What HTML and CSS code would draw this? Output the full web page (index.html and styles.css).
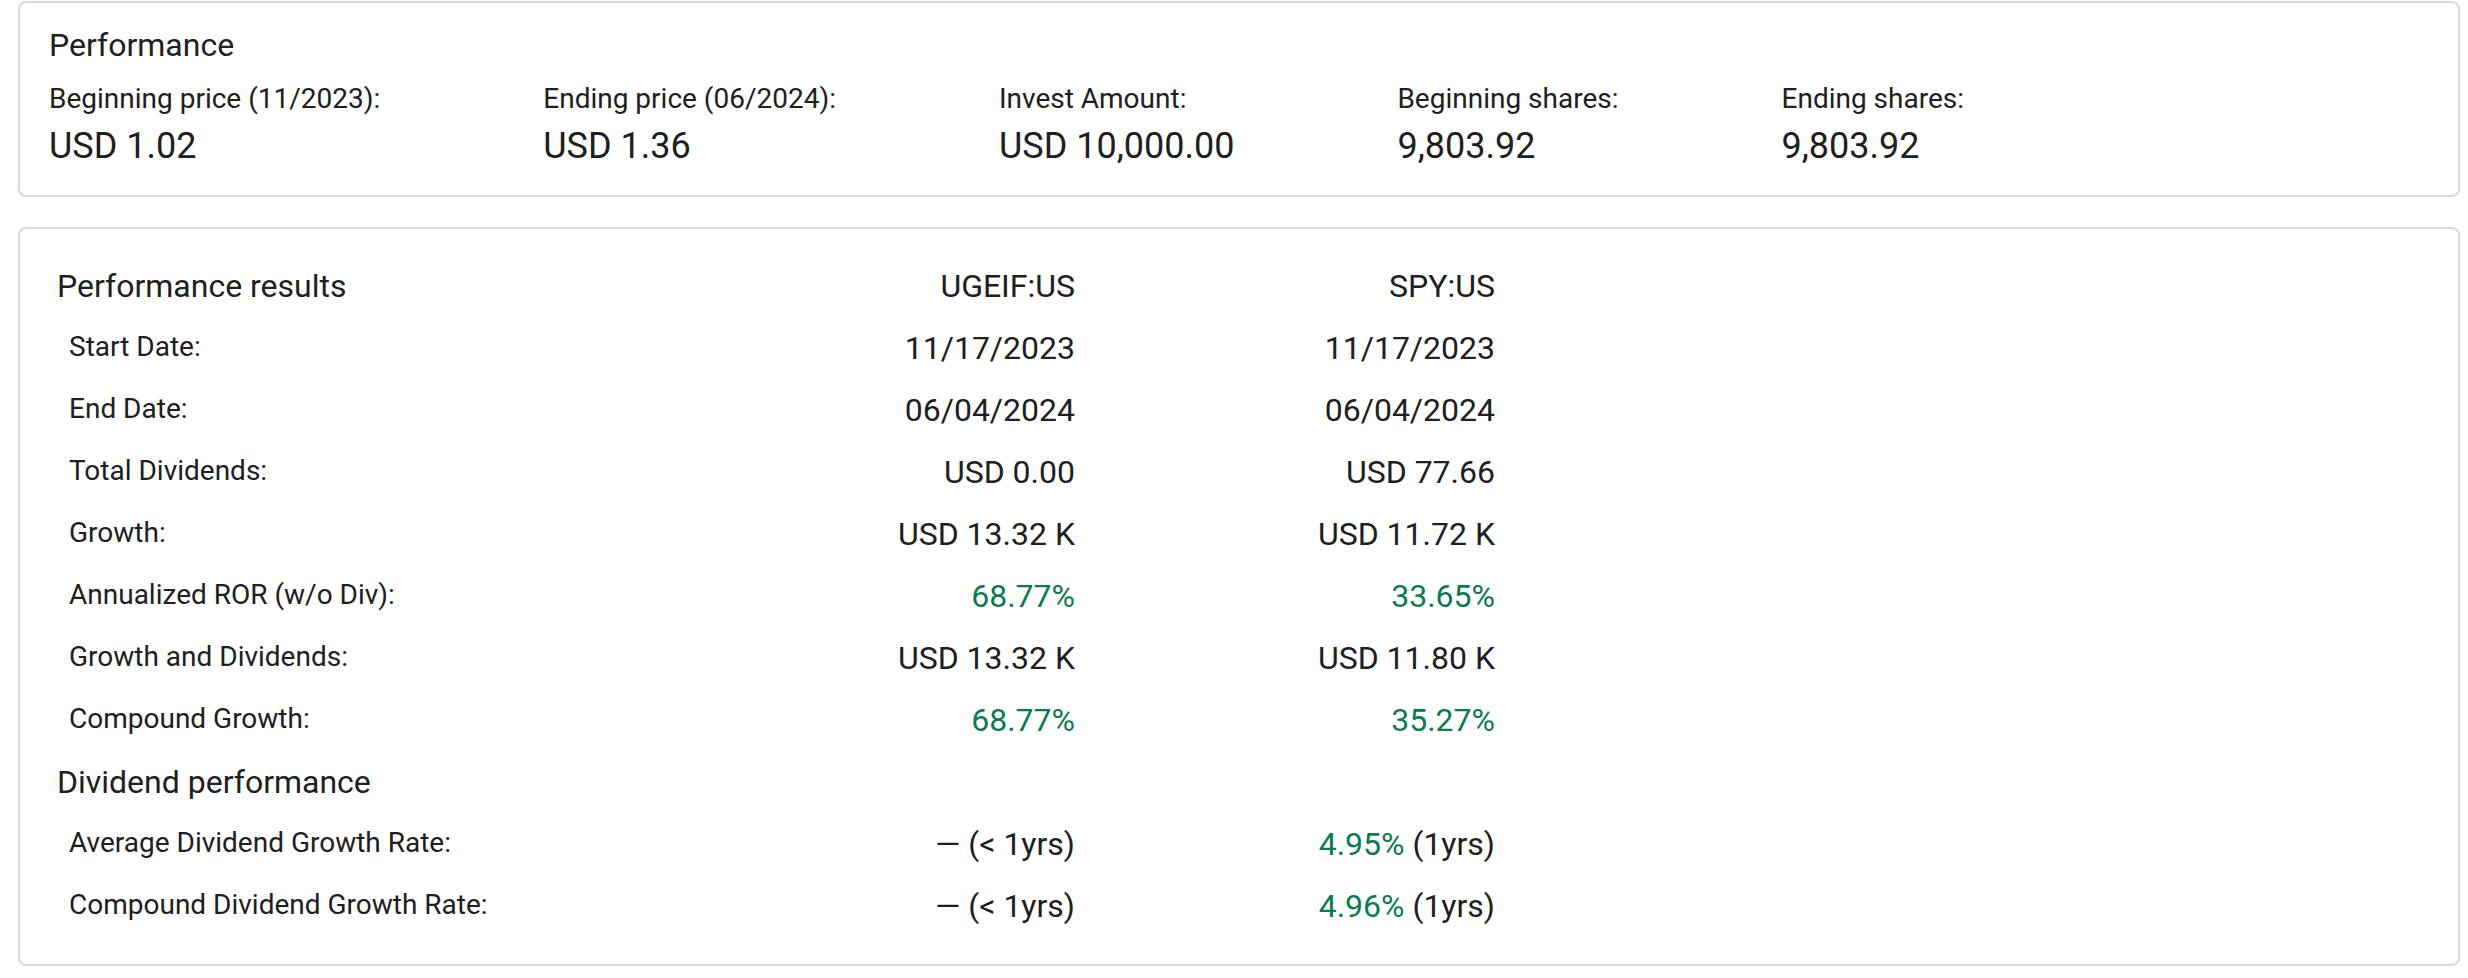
FILE: index.html
```html
<!DOCTYPE html>
<html lang="en">
<head>
<meta charset="utf-8">
<title>Performance</title>
<link rel="stylesheet" href="styles.css">
</head>
<body>
<section class="card summary">
  <h2 class="summary-title">Performance</h2>
  <div class="stats">
    <div class="stat"><div class="stat-label">Beginning price (11/2023):</div><div class="stat-value">USD 1.02</div></div>
    <div class="stat"><div class="stat-label">Ending price (06/2024):</div><div class="stat-value">USD 1.36</div></div>
    <div class="stat"><div class="stat-label">Invest Amount:</div><div class="stat-value">USD 10,000.00</div></div>
    <div class="stat"><div class="stat-label">Beginning shares:</div><div class="stat-value">9,803.92</div></div>
    <div class="stat"><div class="stat-label">Ending shares:</div><div class="stat-value">9,803.92</div></div>
  </div>
</section>

<section class="card results">
  <div class="grid">
    <div class="title">Performance results</div>
    <div class="head">UGEIF:US</div>
    <div class="head">SPY:US</div>

    <div class="label">Start Date:</div>
    <div class="val">11/17/2023</div>
    <div class="val">11/17/2023</div>

    <div class="label">End Date:</div>
    <div class="val">06/04/2024</div>
    <div class="val">06/04/2024</div>

    <div class="label">Total Dividends:</div>
    <div class="val">USD 0.00</div>
    <div class="val">USD 77.66</div>

    <div class="label">Growth:</div>
    <div class="val">USD 13.32 K</div>
    <div class="val">USD 11.72 K</div>

    <div class="label">Annualized ROR (w/o Div):</div>
    <div class="val"><span class="pos">68.77%</span></div>
    <div class="val"><span class="pos">33.65%</span></div>

    <div class="label">Growth and Dividends:</div>
    <div class="val">USD 13.32 K</div>
    <div class="val">USD 11.80 K</div>

    <div class="label">Compound Growth:</div>
    <div class="val"><span class="pos">68.77%</span></div>
    <div class="val"><span class="pos">35.27%</span></div>

    <div class="title">Dividend performance</div>
    <div class="head"></div>
    <div class="head"></div>

    <div class="label">Average Dividend Growth Rate:</div>
    <div class="val">— (&lt; 1yrs)</div>
    <div class="val"><span class="pos">4.95%</span> (1yrs)</div>

    <div class="label">Compound Dividend Growth Rate:</div>
    <div class="val">— (&lt; 1yrs)</div>
    <div class="val"><span class="pos">4.96%</span> (1yrs)</div>
  </div>
</section>
</body>
</html>
```

FILE: styles.css
```css
html, body {
  margin: 0;
  padding: 0;
  background: #ffffff;
}

body {
  font-family: Roboto, "Liberation Sans", Arial, sans-serif;
  color: #202020;
  padding: 1px 8px 0 18px;
}

.card {
  border: 2px solid #d6d9e4;
  border-radius: 8px;
  background: #fff;
}

.summary {
  padding: 22px 29px 27px;
}

.summary-title {
  margin: 0;
  font-size: 32px;
  font-weight: 400;
  line-height: 40px;
}

.stats {
  display: flex;
  gap: 163px;
  margin-top: 17px;
}

.stat-label {
  font-size: 28px;
  line-height: 34px;
}

.stat-value {
  font-size: 36px;
  line-height: 44px;
  margin-top: 8px;
}

.results {
  margin-top: 30px;
  padding: 26px 37px 27px;
}

.grid {
  display: grid;
  grid-template-columns: 600px 418px 420px;
  grid-auto-rows: 62px;
  align-items: center;
}

.title {
  font-size: 32px;
  line-height: 40px;
}

.head {
  font-size: 32px;
  line-height: 40px;
  text-align: right;
}

.label {
  font-size: 28px;
  line-height: 34px;
  padding-left: 12px;
  margin-top: -2px;
}

.val {
  font-size: 32px;
  line-height: 40px;
  text-align: right;
}

.pos {
  color: #0a7a50;
}
```
